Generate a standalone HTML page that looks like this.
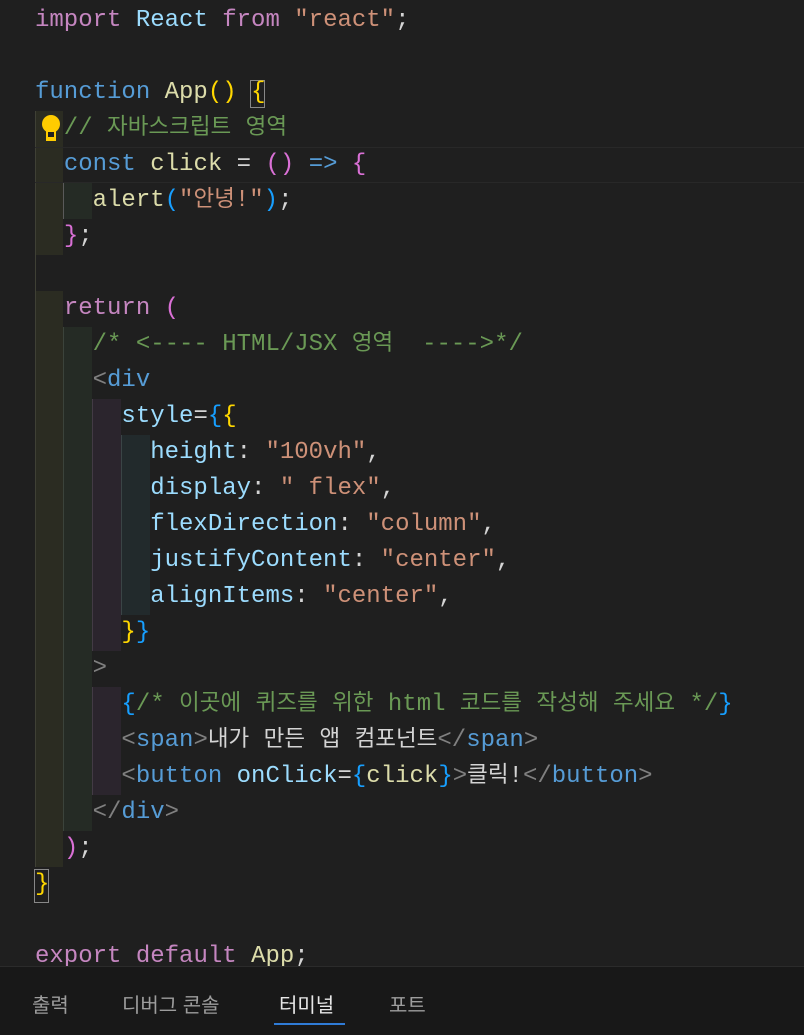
<!DOCTYPE html>
<html><head><meta charset="utf-8"><style>
body{margin:0;width:804px;height:1034px;background:#1f1f1f;overflow:hidden;position:relative;font-family:"Liberation Mono","Noto Sans CJK KR",monospace;font-size:24px;color:#d4d4d4}
.l{position:absolute;left:35px;height:36px;line-height:36px;white-space:pre}
.k{font-family:"Noto Sans CJK KR",sans-serif;font-size:22.5px;line-height:0}
.b{position:absolute}
.kw{color:#c586c0}.bl{color:#569cd6}.fn{color:#dcdcaa}.st{color:#ce9178}.cm{color:#6a9955}.vr{color:#9cdcfe}.y{color:#ffd700}.p{color:#da70d6}.c{color:#179fff}.g{color:#808080}
.panel{position:absolute;left:0;top:966px;width:804px;height:68px;background:#181818;border-top:1px solid #2b2b2b;font-family:"Liberation Sans","Noto Sans CJK KR",sans-serif;font-size:20px;color:#9d9d9d}
.panel span{position:absolute;top:22px}
</style></head><body>
<div class="b" style="left:35px;top:111px;width:28px;height:144px;background:#2b2c22"></div>
<div class="b" style="left:35px;top:291px;width:28px;height:576px;background:#2b2c22"></div>
<div class="b" style="left:35px;top:111px;width:1px;height:756px;background:#3f4035"></div>
<div class="b" style="left:63px;top:183px;width:29px;height:36px;background:#252b25"></div>
<div class="b" style="left:63px;top:327px;width:29px;height:504px;background:#252b25"></div>
<div class="b" style="left:63px;top:183px;width:1px;height:36px;background:#5a5a5a"></div>
<div class="b" style="left:63px;top:327px;width:1px;height:504px;background:#3b433b"></div>
<div class="b" style="left:92px;top:399px;width:29px;height:252px;background:#2b252d"></div>
<div class="b" style="left:92px;top:687px;width:29px;height:108px;background:#2b252d"></div>
<div class="b" style="left:92px;top:399px;width:1px;height:252px;background:#433b45"></div>
<div class="b" style="left:92px;top:687px;width:1px;height:108px;background:#433b45"></div>
<div class="b" style="left:121px;top:435px;width:29px;height:180px;background:#222a2c"></div>
<div class="b" style="left:121px;top:435px;width:1px;height:180px;background:#3a4446"></div>
<div class="b" style="left:35px;top:147px;width:769px;height:34px;border-top:1px solid #282828;border-bottom:1px solid #282828"></div>
<div class="b" style="left:250px;top:80px;width:13px;height:26px;border:1px solid #888"></div>
<div class="b" style="left:34px;top:869px;width:13px;height:32px;border:1px solid #888"></div>
<svg class="b" style="left:40px;top:114px" width="22" height="30" viewBox="0 0 22 30"><circle cx="11" cy="10" r="9" fill="#ffcc00"/><rect x="6" y="14" width="10" height="9" fill="#ffcc00"/><rect x="8" y="18" width="6" height="8" fill="#1f1f1f"/><rect x="6" y="23" width="10" height="4" fill="#ffcc00"/></svg>
<div class="l" style="top:3px"><span class="kw">import</span> <span class="vr">React</span> <span class="kw">from</span> <span class="st">"react"</span>;</div>
<div class="l" style="top:75px"><span class="bl">function</span> <span class="fn">App</span><span class="y">()</span> <span class="y">{</span></div>
<div class="l cm" style="top:111px">  // <span class="k">자바스크립트</span> <span class="k">영역</span></div>
<div class="l" style="top:147px">  <span class="bl">const</span> <span class="fn">click</span> = <span class="p">()</span> <span class="bl">=&gt;</span> <span class="p">{</span></div>
<div class="l" style="top:183px">    <span class="fn">alert</span><span class="c">(</span><span class="st">"<span class="k">안녕</span>!"</span><span class="c">)</span>;</div>
<div class="l" style="top:219px">  <span class="p">}</span>;</div>
<div class="l" style="top:291px">  <span class="kw">return</span> <span class="p">(</span></div>
<div class="l cm" style="top:327px">    /* &lt;---- HTML/JSX <span class="k">영역</span>  ----&gt;*/</div>
<div class="l" style="top:363px">    <span class="g">&lt;</span><span class="bl">div</span></div>
<div class="l" style="top:399px">      <span class="vr">style</span>=<span class="c">{</span><span class="y">{</span></div>
<div class="l" style="top:435px">        <span class="vr">height</span>: <span class="st">"100vh"</span>,</div>
<div class="l" style="top:471px">        <span class="vr">display</span>: <span class="st">" flex"</span>,</div>
<div class="l" style="top:507px">        <span class="vr">flexDirection</span>: <span class="st">"column"</span>,</div>
<div class="l" style="top:543px">        <span class="vr">justifyContent</span>: <span class="st">"center"</span>,</div>
<div class="l" style="top:579px">        <span class="vr">alignItems</span>: <span class="st">"center"</span>,</div>
<div class="l" style="top:615px">      <span class="y">}</span><span class="c">}</span></div>
<div class="l" style="top:651px">    <span class="g">&gt;</span></div>
<div class="l" style="top:687px">      <span class="c">{</span><span class="cm">/* <span class="k">이곳에</span> <span class="k">퀴즈를</span> <span class="k">위한</span> html <span class="k">코드를</span> <span class="k">작성해</span> <span class="k">주세요</span> */</span><span class="c">}</span></div>
<div class="l" style="top:723px">      <span class="g">&lt;</span><span class="bl">span</span><span class="g">&gt;</span><span class="k">내가</span> <span class="k">만든</span> <span class="k">앱</span> <span class="k">컴포넌트</span><span class="g">&lt;/</span><span class="bl">span</span><span class="g">&gt;</span></div>
<div class="l" style="top:759px">      <span class="g">&lt;</span><span class="bl">button</span> <span class="vr">onClick</span>=<span class="c">{</span><span class="fn">click</span><span class="c">}</span><span class="g">&gt;</span><span class="k">클릭</span>!<span class="g">&lt;/</span><span class="bl">button</span><span class="g">&gt;</span></div>
<div class="l" style="top:795px">    <span class="g">&lt;/</span><span class="bl">div</span><span class="g">&gt;</span></div>
<div class="l" style="top:831px">  <span class="p">)</span>;</div>
<div class="l" style="top:867px"><span class="y">}</span></div>
<div class="l" style="top:939px"><span class="kw">export</span> <span class="kw">default</span> <span class="fn">App</span>;</div>
<div class="panel">
<span style="left:32px">출력</span>
<span style="left:122px">디버그 콘솔</span>
<span style="left:279px;color:#e7e7e7">터미널</span>
<span style="left:389px">포트</span>
<div style="position:absolute;left:274px;top:56px;width:71px;height:2px;background:#2f7bd6"></div>
</div>
</body></html>
